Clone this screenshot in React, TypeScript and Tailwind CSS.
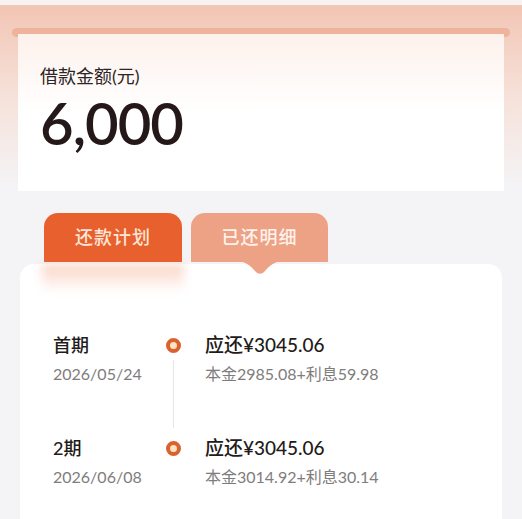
import React from "react";

const plans = [
  { period: "首期", date: "2026/05/24", amount: "应还¥3045.06", detail: "本金2985.08+利息59.98" },
  { period: "2期", date: "2026/06/08", amount: "应还¥3045.06", detail: "本金3014.92+利息30.14" },
];

const font = { fontFamily: '"Lato", "Noto Sans CJK SC", "Noto Sans", sans-serif' };

export default function App() {
  return (
    <div className="w-[522px] h-[519px] overflow-hidden bg-[#f4f4f7] flex flex-col" style={font}>
      <div className="h-[5px] bg-[#f7f3f2] shrink-0" />
      <div className="bg-gradient-to-b from-[#f2c5b4] via-[#f6e2da] to-[#f4f4f7] px-[12px] pt-[23px] shrink-0">
        <div className="h-[9px] rounded-full bg-[#efb39b]" />
        <div className="mx-[6px] -mt-[3px] h-[157px] bg-gradient-to-b from-[#fdf1ec] via-white to-white px-[22px] pt-[30px]">
          <div className="text-[18px] leading-[24px] text-[#2e2626]">借款金额(元)</div>
          <div className="mt-[5px] text-[58px] leading-[60px] font-semibold text-[#251819] tracking-[-1px]">
            6,000
          </div>
        </div>
      </div>

      <div className="relative z-10 flex pl-[44px] gap-[9px] mt-[22px] shrink-0">
        <div className="w-[138px] h-[49px] rounded-t-[14px] bg-[#e7602d] flex items-center justify-center text-[18px] font-medium text-[#fde6d8] tracking-[1px]">
          还款计划
        </div>
        <div className="relative w-[137px] h-[49px] rounded-t-[14px] bg-[#eda185] flex items-center justify-center text-[18px] font-medium text-[#fff2ec] tracking-[1px]">
          已还明细
          <svg className="absolute left-[47px] top-[48px]" width="44" height="15" viewBox="0 0 44 15">
            <path d="M0 0 H44 C36 1 31 5 27 10 C24 13.5 20 13.5 17 10 C13 5 8 1 0 0 Z" fill="#eda185" />
          </svg>
        </div>
      </div>

      <div className="mx-[20px] mt-[2px] flex-1 bg-white rounded-t-[14px] relative">
        <div className="absolute left-[22px] top-0 w-[142px] h-[28px] bg-gradient-to-b from-[#f9d3c3] to-white blur-[5px]" />
        <div className="relative pt-[69px] pl-[33px]">
          {plans.map((p, i) => (
            <div key={p.period} className="flex pb-[52px]">
              <div className="w-[110px]">
                <div className="text-[18px] leading-[24px] font-medium text-[#231a1a]">{p.period}</div>
                <div className="mt-[7px] text-[16px] leading-[20px] text-[#807c7c]">{p.date}</div>
              </div>
              <div className="w-[20px] flex flex-col items-center pt-[5px]">
                <div className="w-[15px] h-[15px] rounded-full border-[4px] border-[#d9622f] bg-[#fde3c4] shrink-0" />
                {i < plans.length - 1 && <div className="w-px flex-1 bg-[#e6e6e8] mt-[7px] -mb-[44px]" />}
              </div>
              <div className="ml-[22px]">
                <div className="text-[19px] leading-[24px] font-medium text-[#231a1a]">{p.amount}</div>
                <div className="mt-[7px] text-[16px] leading-[20px] text-[#807c7c]">{p.detail}</div>
              </div>
            </div>
          ))}
        </div>
      </div>
    </div>
  );
}
